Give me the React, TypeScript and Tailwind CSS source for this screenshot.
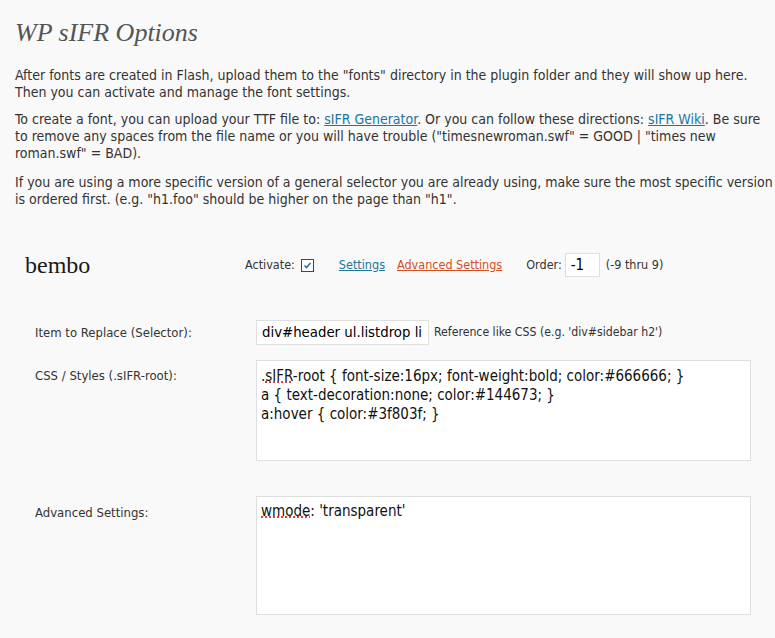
import React from "react";

const sans = { fontFamily: "'DejaVu Sans Condensed', 'DejaVu Sans', Verdana, sans-serif" };

export default function App() {
  return (
    <div className="min-h-[638px] w-[775px] bg-[#f9f9f9] text-[#333] pl-[15px] pr-[2px] overflow-hidden" style={sans}>
      <h2 className="pt-[18px] h-[64px] text-[26px] italic text-[#555] leading-[30px]" style={{ fontFamily: "'Liberation Serif', 'Times New Roman', serif" }}>
        WP sIFR Options
      </h2>
      <div className="text-[14px] leading-[17px]">
        <p className="mt-[3px]">
          After fonts are created in Flash, upload them to the "fonts" directory in the plugin folder and they will show up here.
          <br />
          Then you can activate and manage the font settings.
        </p>
        <p className="mt-[10px]">
          To create a font, you can upload your TTF file to: <a className="text-[#21759b] underline">sIFR Generator</a>. Or you can follow these directions: <a className="text-[#21759b] underline">sIFR Wiki</a>. Be sure to remove any spaces from the file name or you will have trouble ("timesnewroman.swf" = GOOD | "times new roman.swf" = BAD).
        </p>
        <p className="mt-[12px]">
          If you are using a more specific version of a general selector you are already using, make sure the most specific version is ordered first. (e.g. "h1.foo" should be higher on the page than "h1".
        </p>
      </div>

      <div className="mt-[42px] flex items-center h-[30px] text-[12.5px]">
        <div className="w-[230px] pl-[10px] text-[24px] text-[#1a1a1a] leading-[30px]" style={{ fontFamily: "'Liberation Serif', 'Times New Roman', serif" }}>
          bembo
        </div>
        <span>Activate:</span>
        <span className="ml-[6px] inline-flex items-center justify-center w-[13px] h-[13px] border border-[#1d4f74] bg-white">
          <svg width="9" height="9" viewBox="0 0 9 9">
            <path d="M1.5 4.5 L3.5 6.5 L7.5 2" stroke="#2e6e9e" strokeWidth="1.6" fill="none" />
          </svg>
        </span>
        <a className="ml-[25px] text-[#21759b] underline">Settings</a>
        <a className="ml-[12px] text-[#d54e21] underline">Advanced Settings</a>
        <span className="ml-[24px]">Order:</span>
        <span className="ml-[3px] inline-flex items-center w-[35px] h-[24px] border border-[#dfdfdf] bg-white px-[5px] text-[15px] text-black">-1</span>
        <span className="ml-[6px]">(-9 thru 9)</span>
      </div>

      <div className="mt-[40px] grid grid-cols-[241px_1fr] gap-y-[15px] text-[13px]">
        <div className="pl-[20px] self-center">Item to Replace (Selector):</div>
        <div className="flex items-center">
          <div className="w-[173px] h-[25px] border border-[#dfdfdf] bg-white px-[5px] flex items-center text-[14.8px] text-black overflow-hidden whitespace-nowrap">
            div#header ul.listdrop li
          </div>
          <span className="ml-[5px] text-[12.2px]">Reference like CSS (e.g. 'div#sidebar h2')</span>
        </div>

        <div className="pl-[20px] pt-[6px]">CSS / Styles (.sIFR-root):</div>
        <div className="w-[495px] h-[101px] border border-[#dfdfdf] bg-white px-[4px] pt-[6px] text-[15px] leading-[19px] text-[#111]">
          <div>
            .<span className="underline decoration-dotted decoration-[#c00]">sIFR</span>-root {"{"} font-size:16px; font-weight:bold; color:#666666; {"}"}
          </div>
          <div>a {"{"} text-decoration:none; color:#144673; {"}"}</div>
          <div>a:hover {"{"} color:#3f803f; {"}"}</div>
        </div>

        <div className="pl-[20px] pt-[7px] mt-[20px]">Advanced Settings:</div>
        <div className="mt-[20px] w-[495px] h-[119px] border border-[#dfdfdf] bg-white px-[4px] pt-[5px] text-[15px] leading-[19px] text-[#111]">
          <span className="underline decoration-dotted decoration-[#c00]">wmode</span>: 'transparent'
        </div>
      </div>
    </div>
  );
}
